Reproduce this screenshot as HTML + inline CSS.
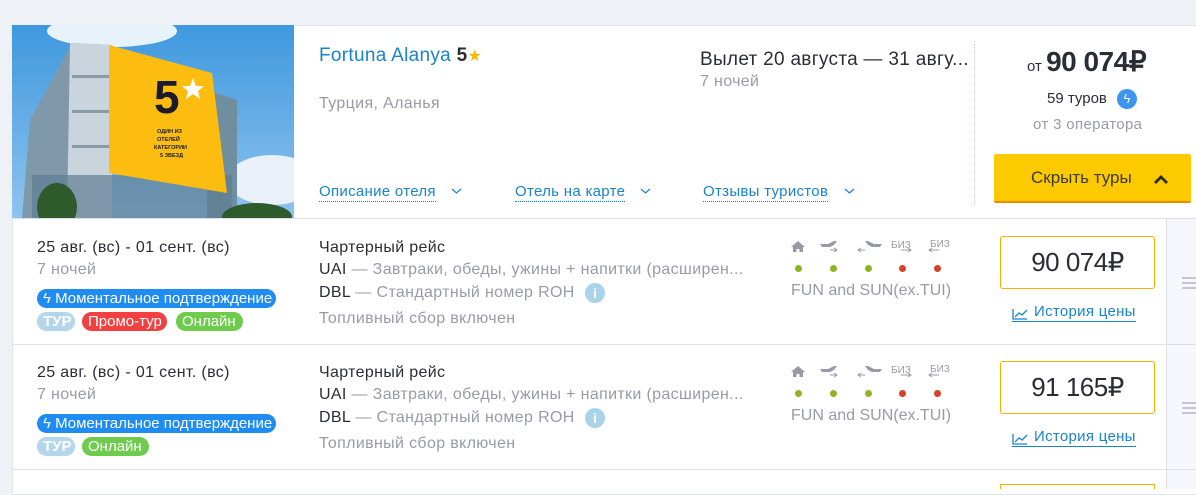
<!DOCTYPE html>
<html><head><meta charset="utf-8"><style>
*{margin:0;padding:0;box-sizing:border-box}
body{width:1196px;height:487px;overflow:hidden;background:#eef1f6;font-family:"Liberation Sans",sans-serif;position:relative}
.a{position:absolute;white-space:nowrap}
.card{position:absolute;left:12px;top:25px;width:1200px;height:470px;background:#fff;border:1px solid #e1e5ee}
.blue{color:#1a84c9}
.gr{color:#9a9aa6}
.dk{color:#2c2c36}
.ls{letter-spacing:0.35px}
.lnk{color:#1a84c9;font-size:15px;border-bottom:1px dotted #1a84c9;line-height:18px;letter-spacing:0.3px}
.tag{position:absolute;height:19px;border-radius:10px;color:#fff;font-size:15px;line-height:19px;padding:0 6px;white-space:nowrap;overflow:hidden}
.pricebox{position:absolute;width:155px;height:53px;border:1.5px solid #f6b000;border-radius:3px;font-size:26px;color:#2c2c36;text-align:center;line-height:50px;letter-spacing:-0.5px}
.dot{position:absolute;width:7px;height:7px;border-radius:50%}
.ham{position:absolute;width:14px;height:12px;border-top:2px solid #c4c5d2;border-bottom:2px solid #c4c5d2}
.ham div{margin-top:3px;border-top:2px solid #c4c5d2}
</style></head><body>
<div class="card"></div>
<svg class="a" style="left:12px;top:25px" width="282" height="194" viewBox="0 0 282 194">
<defs><linearGradient id="s" x1="0" y1="0" x2="0" y2="1"><stop offset="0" stop-color="#3f98de"/><stop offset="1" stop-color="#8ec4ef"/></linearGradient></defs>
<rect width="282" height="194" fill="url(#s)"/>
<ellipse cx="100" cy="6" rx="65" ry="16" fill="#e8f2fb"/>
<ellipse cx="260" cy="155" rx="45" ry="25" fill="#e9f0f7"/>
<polygon points="18,95 60,18 100,20 100,194 10,194" fill="#7f98aa"/>
<polygon points="58,18 100,20 100,194 55,194" fill="#c9d4dc"/>
<rect x="60" y="50" width="38" height="3" fill="#8a9aa6"/><rect x="60" y="85" width="38" height="3" fill="#8a9aa6"/><rect x="60" y="120" width="38" height="3" fill="#8a9aa6"/>
<polygon points="195,65 225,75 225,194 195,194" fill="#6f8ea0"/>
<rect x="20" y="150" width="200" height="44" fill="#5f7e92" opacity=".7"/>
<polygon points="97,20 200,48 215,168 97,148" fill="#fdbd10"/>
<text x="142" y="88" font-size="46" font-weight="bold" fill="#1b1b2a" font-family="Liberation Sans">5</text>
<polygon points="181,53 184,61 192,61 186,66 188,74 181,69 174,74 176,66 170,61 178,61" fill="#fff"/>
<text x="145" y="108" font-size="5.5" font-weight="bold" fill="#1b1b2a">ОДИН ИЗ</text>
<text x="145" y="116" font-size="5.5" font-weight="bold" fill="#1b1b2a">ОТЕЛЕЙ</text>
<text x="142" y="124" font-size="5.5" font-weight="bold" fill="#1b1b2a">КАТЕГОРИИ</text>
<text x="148" y="132" font-size="5.5" font-weight="bold" fill="#1b1b2a">5 ЗВЕЗД</text>
<ellipse cx="45" cy="182" rx="20" ry="24" fill="#2f5a2c"/>
<ellipse cx="245" cy="192" rx="35" ry="14" fill="#2f5a2c"/>
</svg>

<div class="a blue" style="left:319px;top:45px;font-size:19px;letter-spacing:0.3px">Fortuna Alanya <span class="dk" style="font-weight:bold">5</span><span style="color:#f6b800;font-size:16px">★</span></div>
<div class="a gr ls" style="left:319px;top:95px;font-size:16px">Турция, Аланья</div>
<div class="a lnk" style="left:319px;top:183px">Описание отеля</div>
<div class="a lnk" style="left:515px;top:183px">Отель на карте</div>
<div class="a lnk" style="left:703px;top:183px">Отзывы туристов</div>

<div class="a dk" style="left:700px;top:49px;font-size:19px;letter-spacing:0.3px">Вылет 20 августа — 31 авгу...</div>
<div class="a gr ls" style="left:700px;top:73px;font-size:16px">7 ночей</div>
<div class="a" style="left:974px;top:44px;height:160px;border-left:1px dotted #c8cce0"></div>
<div class="a dk" style="left:1027px;top:45px;font-size:15px">от <span style="font-size:28px;font-weight:bold;letter-spacing:-0.5px">90 074₽</span></div>
<div class="a dk" style="left:1047px;top:90px;font-size:15px">59 туров</div>
<div class="a" style="left:1117px;top:89px;width:20px;height:20px;border-radius:50%;background:#3d95f0;color:#fff;font-size:13px;text-align:center;line-height:20px">ϟ</div>
<div class="a gr ls" style="left:1033px;top:116px;font-size:15px">от 3 оператора</div>
<div class="a" style="left:994px;top:154px;width:197px;height:49px;background:#fdca00;border-bottom:2px solid #f08a00;border-radius:2px;font-size:17px;color:#3a3a2a;line-height:48px;padding-left:37px">Скрыть туры</div>

<div class="a" style="left:12px;top:218px;width:1190px;border-top:1px solid #dedfe8"></div>
<div class="a" style="left:1166px;top:219px;width:40px;height:270px;background:#f6f7fc;border-left:1px solid #dedfe8"></div>
<div class="a" style="left:12px;top:344px;width:1190px;border-top:1px solid #dedfe8"></div>
<div class="a" style="left:12px;top:469px;width:1190px;border-top:1px solid #dedfe8"></div>

<svg class="a" style="left:0;top:0" width="1196" height="487"><g fill="none" stroke="#1a84c9" stroke-width="1.2"><path d="M452 189l4.5 4 4.5-4"/><path d="M641 189l4.5 4 4.5-4"/><path d="M845 189l4.5 4 4.5-4"/></g>
<g fill="#9a9aa6"><path d="M791 247l7-6 7 6h-2v5h-3.5v-3h-3v3H793v-5z"/>
<path d="M820 244h8l6-3h3l-3 4-4 2h-8z"/><path d="M830 250h7M834 248l3 2-3 2" stroke="#9a9aa6" fill="none"/>
<path d="M882 244h-8l-6-3h-3l3 4 4 2h8z"/><path d="M865 250h-7M861 248l-3 2 3 2" stroke="#9a9aa6" fill="none"/>
<path d="M791 372l7-6 7 6h-2v5h-3.5v-3h-3v3H793v-5z"/>
<path d="M820 369h8l6-3h3l-3 4-4 2h-8z"/><path d="M830 375h7M834 373l3 2-3 2" stroke="#9a9aa6" fill="none"/>
<path d="M882 369h-8l-6-3h-3l3 4 4 2h8z"/><path d="M865 375h-7M861 373l-3 2 3 2" stroke="#9a9aa6" fill="none"/>
</g>
<g fill="none" stroke="#9a9aa6"><path d="M901 250h10M908 248l3 2-3 2"/><path d="M939 250h-10M932 248l-3 2 3 2"/><path d="M901 375h10M908 373l3 2-3 2"/><path d="M939 375h-10M932 373l-3 2 3 2"/></g>
<g fill="none" stroke="#1a84c9" stroke-width="1.3"><path d="M1013 309v10h14M1015 317l4-4 3 2 5-5"/><path d="M1013 434v10h14M1015 442l4-4 3 2 5-5"/></g>
<path d="M1155 183l6-6 6 6" fill="none" stroke="#2c2c2a" stroke-width="2.8"/>
</svg>
<div class="a" style="left:891px;top:240px;font-size:10px;color:#9a9aa6">БИЗ</div>
<div class="a" style="left:930px;top:239px;font-size:10px;color:#9a9aa6">БИЗ</div>
<div class="a" style="left:891px;top:365px;font-size:10px;color:#9a9aa6">БИЗ</div>
<div class="a" style="left:930px;top:364px;font-size:10px;color:#9a9aa6">БИЗ</div>

<div class="a dk ls" style="left:37px;top:239px;font-size:16px">25 авг. (вс) - 01 сент. (вс)</div>
<div class="a gr ls" style="left:37px;top:261px;font-size:16px">7 ночей</div>
<div class="tag" style="left:37px;top:289px;width:239px;background:#1e8cf0">ϟ Моментальное подтверждение</div>
<div class="tag" style="left:37px;top:312px;width:38px;background:#b4d6ec;font-weight:bold">ТУР</div>
<div class="tag" style="left:82px;top:312px;width:85px;background:#f24040">Промо-тур</div>
<div class="tag" style="left:176px;top:312px;width:67px;background:#6ecb4c">Онлайн</div>
<div class="a dk ls" style="left:319px;top:239px;font-size:16px">Чартерный рейс</div>
<div class="a gr ls" style="left:319px;top:261px;font-size:16px"><span class="dk">UAI</span> — Завтраки, обеды, ужины + напитки (расширен...</div>
<div class="a gr ls" style="left:319px;top:284px;font-size:16px"><span class="dk">DBL</span> — Стандартный номер ROH</div>
<div class="a" style="left:585px;top:283px;width:20px;height:20px;border-radius:50%;background:#a9d3ea;color:#fff;font-weight:bold;font-size:14px;text-align:center;line-height:20px">i</div>
<div class="a gr ls" style="left:319px;top:310px;font-size:16px">Топливный сбор включен</div>
<div class="dot" style="left:795px;top:265px;background:#8cb424"></div>
<div class="dot" style="left:830px;top:265px;background:#8cb424"></div>
<div class="dot" style="left:865px;top:265px;background:#8cb424"></div>
<div class="dot" style="left:899px;top:265px;background:#d8402a"></div>
<div class="dot" style="left:934px;top:265px;background:#d8402a"></div>
<div class="a gr" style="left:791px;top:282px;font-size:16px">FUN and SUN(ex.TUI)</div>
<div class="pricebox" style="left:1000px;top:236px">90 074₽</div>
<div class="a lnk" style="left:1012px;top:303px;border-bottom:1px solid #1a84c9;padding-left:22px">История цены</div>
<div class="ham" style="left:1182px;top:277px"><div></div></div>

<div class="a dk ls" style="left:37px;top:364px;font-size:16px">25 авг. (вс) - 01 сент. (вс)</div>
<div class="a gr ls" style="left:37px;top:386px;font-size:16px">7 ночей</div>
<div class="tag" style="left:37px;top:414px;width:239px;background:#1e8cf0">ϟ Моментальное подтверждение</div>
<div class="tag" style="left:37px;top:437px;width:38px;background:#b4d6ec;font-weight:bold">ТУР</div>
<div class="tag" style="left:82px;top:437px;width:67px;background:#6ecb4c">Онлайн</div>
<div class="a dk ls" style="left:319px;top:364px;font-size:16px">Чартерный рейс</div>
<div class="a gr ls" style="left:319px;top:386px;font-size:16px"><span class="dk">UAI</span> — Завтраки, обеды, ужины + напитки (расширен...</div>
<div class="a gr ls" style="left:319px;top:409px;font-size:16px"><span class="dk">DBL</span> — Стандартный номер ROH</div>
<div class="a" style="left:585px;top:408px;width:20px;height:20px;border-radius:50%;background:#a9d3ea;color:#fff;font-weight:bold;font-size:14px;text-align:center;line-height:20px">i</div>
<div class="a gr ls" style="left:319px;top:435px;font-size:16px">Топливный сбор включен</div>
<div class="dot" style="left:795px;top:390px;background:#8cb424"></div>
<div class="dot" style="left:830px;top:390px;background:#8cb424"></div>
<div class="dot" style="left:865px;top:390px;background:#8cb424"></div>
<div class="dot" style="left:899px;top:390px;background:#d8402a"></div>
<div class="dot" style="left:934px;top:390px;background:#d8402a"></div>
<div class="a gr" style="left:791px;top:407px;font-size:16px">FUN and SUN(ex.TUI)</div>
<div class="pricebox" style="left:1000px;top:361px">91 165₽</div>
<div class="a lnk" style="left:1012px;top:428px;border-bottom:1px solid #1a84c9;padding-left:22px">История цены</div>
<div class="ham" style="left:1182px;top:402px"><div></div></div>
<div class="a" style="left:1000px;top:484px;width:155px;height:5px;border:1.5px solid #f6b000;border-bottom:none"></div>
</body></html>
